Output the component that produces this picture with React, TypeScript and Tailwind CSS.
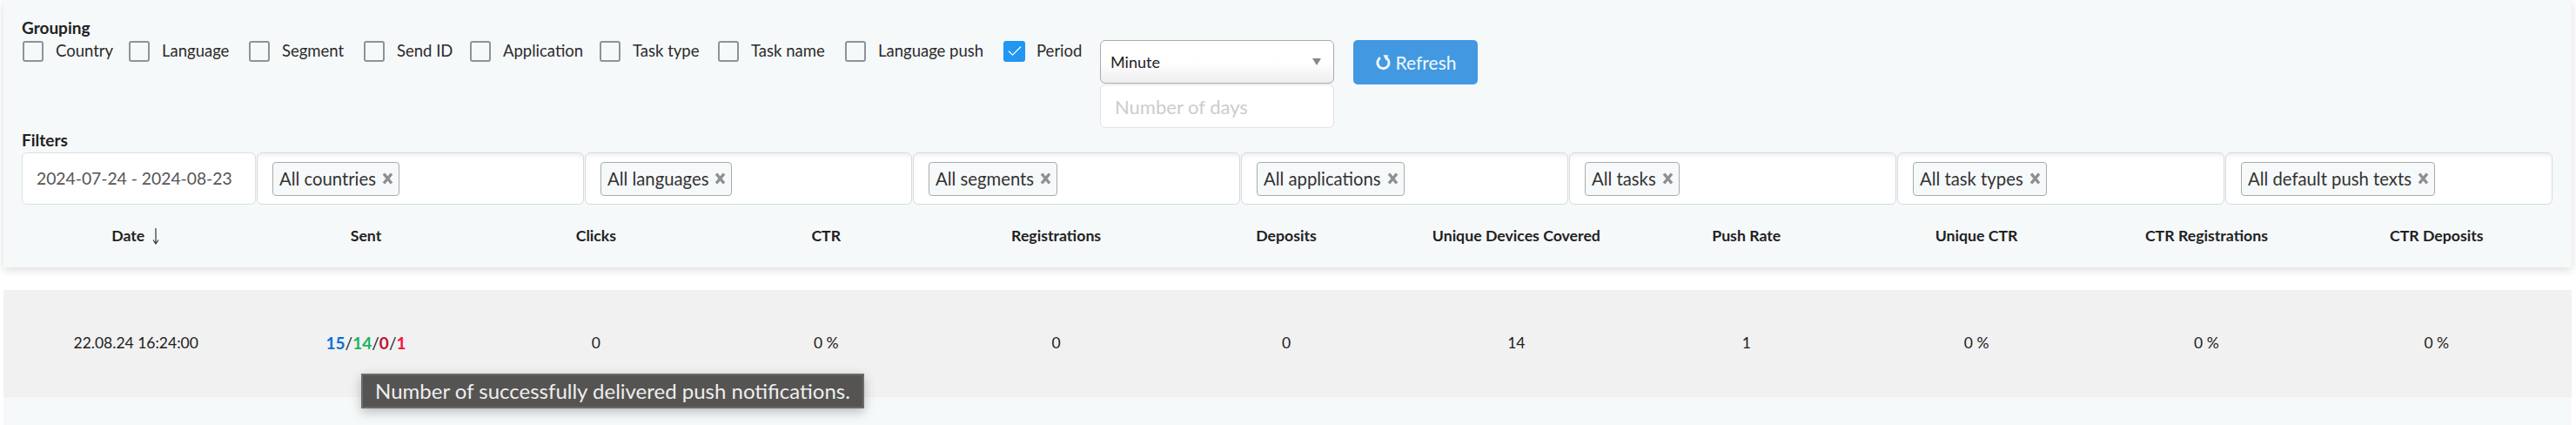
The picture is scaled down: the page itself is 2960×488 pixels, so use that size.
import { Check } from 'lucide-react';

const groupings = [
  { label: 'Country', width: 'w-[122px]' },
  { label: 'Language', width: 'w-[138px]' },
  { label: 'Segment', width: 'w-[132px]' },
  { label: 'Send ID', width: 'w-[122px]' },
  { label: 'Application', width: 'w-[149px]' },
  { label: 'Task type', width: 'w-[136px]' },
  { label: 'Task name', width: 'w-[146px]' },
  { label: 'Language push', width: 'w-[182px]' },
];

const filters = [
  'All countries',
  'All languages',
  'All segments',
  'All applications',
  'All tasks',
  'All task types',
  'All default push texts',
];

const columns = [
  'Date',
  'Sent',
  'Clicks',
  'CTR',
  'Registrations',
  'Deposits',
  'Unique Devices Covered',
  'Push Rate',
  'Unique CTR',
  'CTR Registrations',
  'CTR Deposits',
];

function Chip({ label }: { label: string }) {
  return (
    <span className="flex h-[39px] items-center gap-[7px] rounded-[4px] border border-[#aaaaaa] bg-[#f6f9fa] pl-[7px] pr-[6px] text-[20.3px] text-[#333333]">
      {label}
      <svg width="13" height="14" viewBox="0 0 13 14" className="mt-[-1px]">
        <path d="M2 1.5 L11 12.5 M11 1.5 L2 12.5" stroke="#8f8f8f" strokeWidth="3.4" fill="none" />
      </svg>
    </span>
  );
}

export default function App() {
  return (
    <div className="h-[488px] w-[2960px] overflow-hidden bg-white font-['Lato',sans-serif] text-[18.5px] text-[#2b2b2b]">
      <div className="ml-[4px] h-[307px] w-[2951px] bg-[#f6f9fa] pl-[21px] pr-[22px] pt-[19px] shadow-[0_3px_10px_rgba(0,0,0,0.14)]">
        <div className="h-[26px] text-[19px] font-bold leading-[26px] text-[#222222]">Grouping</div>
        <div className="ml-[1px] mt-[2px] flex items-start">
          <div className="flex h-[24px] items-center">
            {groupings.map((g) => (
              <label key={g.label} className={`flex items-center gap-[14px] ${g.width}`}>
                <span className="h-[24px] w-[24px] rounded-[3px] border-2 border-[#8b949c]" />
                <span className="whitespace-nowrap">{g.label}</span>
              </label>
            ))}
            <label className="flex w-[111px] items-center gap-[13px]">
              <span className="flex h-[24px] w-[25px] items-center justify-center rounded-[3px] bg-[#2196f3]">
                <Check size={20} color="#ffffff" strokeWidth={1.5} />
              </span>
              <span>Period</span>
            </label>
          </div>
          <div className="mt-[-1px] w-[269px]">
            <div className="flex h-[50px] items-center justify-between rounded-[6px] border border-[#aaaaaa] bg-gradient-to-b from-white from-50% to-[#eeeeee] pl-[11px] pr-[14px] text-[18px] text-[#222222]">
              Minute
              <span className="h-0 w-0 border-x-[5px] border-t-[8px] border-x-transparent border-t-[#888888]" />
            </div>
            <div className="mt-[1px] flex h-[50px] items-center rounded-[6px] border border-[#dfe3e6] bg-white pl-[16px] text-[22px] text-[#cccccc]">
              Number of days
            </div>
          </div>
          <button className="ml-[22px] mt-[-1px] flex h-[51px] w-[143px] items-center justify-center gap-[6px] rounded-[5px] bg-[#4299e1] text-[21px] text-[#f2f8fd]">
            <svg width="18" height="18" viewBox="0 0 18 18" fill="none">
              <path d="M6 3.4 A6.6 6.6 0 1 0 13.6 3.9" stroke="#eef6fc" strokeWidth="3" />
              <path d="M9.5 0 L15.5 0.6 L12.5 6.5 Z" fill="#eef6fc" />
            </svg>
            Refresh
          </button>
        </div>
        <div className="mt-[1px] h-[26px] text-[19px] font-bold leading-[26px] text-[#222222]">Filters</div>
        <div className="mt-[1px] flex h-[60px]">
          <div className="flex w-[269px] shrink-0 items-center rounded-[6px] border border-[#dadfe2] bg-white pl-[16px] text-[19.3px] text-[#555555]">
            2024-07-24 - 2024-08-23
          </div>
          {filters.map((f) => (
            <div
              key={f}
              className="ml-[1px] flex flex-1 items-center rounded-[6px] border border-[#d5dade] bg-white pl-[17px] shadow-[inset_0_8px_6px_-6px_rgba(0,0,0,0.08)]"
            >
              <Chip label={f} />
            </div>
          ))}
        </div>
        <div className="ml-[-1px] mr-[1px] mt-[23px] grid grid-cols-11 text-center text-[17.7px] font-bold leading-[26px] text-[#222222]">
          {columns.map((c) => (
            <div key={c} className="flex items-center justify-center gap-[8px] whitespace-nowrap">
              {c}
              {c === 'Date' && (
                <svg width="10" height="24" viewBox="0 0 10 24" fill="none">
                  <path d="M5 3 V20 M2 16.5 L5 21 L8 16.5" stroke="#333333" strokeWidth="1.2" />
                </svg>
              )}
            </div>
          ))}
        </div>
      </div>
      <div className="ml-[4px] mt-[26px] h-[155px] w-[2951px] bg-[#f6f9fa]">
        <div className="relative h-[123px] bg-[#f1f1f1] pl-[20px] pr-[23px]">
          <div className="grid h-full grid-cols-11 items-center text-center text-[17.5px] text-[#222222]">
            <div>22.08.24 16:24:00</div>
            <div className="text-[19px]">
              <b className="text-[#0a6fdc]">15</b>/<b className="text-[#1ab35d]">14</b>/<b className="text-[#c0102f]">0</b>/<b className="text-[#f0143c]">1</b>
            </div>
            <div>0</div>
            <div>0 %</div>
            <div>0</div>
            <div>0</div>
            <div>14</div>
            <div>1</div>
            <div>0 %</div>
            <div>0 %</div>
            <div>0 %</div>
          </div>
          <div className="absolute left-[411px] top-[96px] flex h-[40px] w-[578px] items-center justify-center whitespace-nowrap border-2 border-[#6a6a68] bg-[#555452] text-[24px] text-[#eeeeee] shadow-[0_4px_12px_rgba(0,0,0,0.25)]">
            Number of successfully delivered push notifications.
          </div>
        </div>
      </div>
    </div>
  );
}
